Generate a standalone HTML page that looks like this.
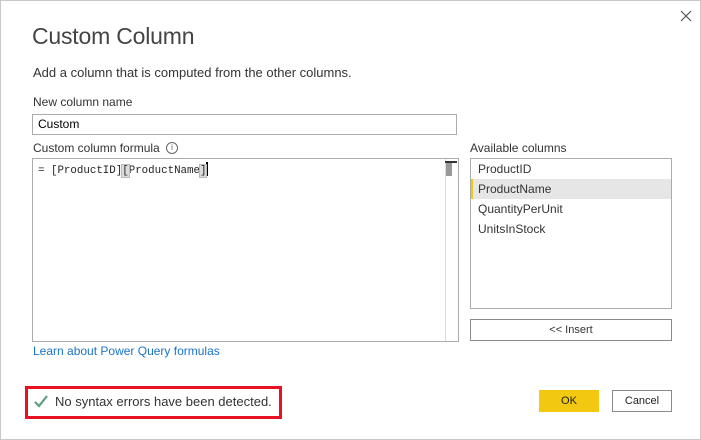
<!DOCTYPE html>
<html><head><style>
body{margin:0;width:701px;height:440px;background:#fff;font-family:"Segoe UI","Liberation Sans",sans-serif;color:#333;position:relative;overflow:hidden}
.a{position:absolute}
.box{position:absolute;box-sizing:border-box;border:1px solid #ababab;background:#fff}
.t{font-size:12px;color:#333;white-space:nowrap}
</style></head><body>
<div class="a" style="left:0;top:0;width:701px;height:440px;box-sizing:border-box;border:1px solid #c8c8c8"></div>
<svg class="a" style="left:680px;top:10px" width="12" height="12"><path d="M1 1L11 11M11 1L1 11" stroke="#555" stroke-width="1.2"/></svg>
<div class="a" style="left:32px;top:23px;font-size:23px;font-weight:300;color:#444;letter-spacing:-0.2px">Custom Column</div>
<div class="a" style="left:33px;top:65px;font-size:13px;color:#333">Add a column that is computed from the other columns.</div>
<div class="a t" style="left:33px;top:95px">New column name</div>
<div class="box" style="left:32px;top:114px;width:425px;height:21px"></div>
<div class="a t" style="left:38px;top:117px;color:#000">Custom</div>
<div class="a t" style="left:33px;top:141px">Custom column formula</div>
<div class="a" style="left:166px;top:142px;width:10px;height:10px;border:1px solid #666;border-radius:50%;font-size:8px;line-height:10px;text-align:center;color:#555">i</div>
<div class="box" style="left:32px;top:158px;width:427px;height:184px"></div>
<div class="a" style="left:445px;top:159px;width:1px;height:182px;background:#ddd"></div>
<div class="a" style="left:445px;top:161px;width:12px;height:2px;background:#333"></div>
<div class="a" style="left:446px;top:163px;width:6px;height:13px;background:#999"></div>
<div class="a" style="left:38px;top:162px;font-family:Consolas,'Liberation Mono',monospace;font-size:10.8px;color:#222;white-space:pre">= [ProductID]<span style="background:#ddd;outline:1px solid #bbb">[</span>ProductName<span style="background:#ddd;outline:1px solid #bbb">]</span><span style="display:inline-block;width:2px;height:14px;background:#000;vertical-align:-3px"></span></div>
<div class="a t" style="left:470px;top:141px">Available columns</div>
<div class="box" style="left:470px;top:158px;width:202px;height:151px"></div>
<div class="a" style="left:471px;top:179px;width:200px;height:20px;background:#e6e6e6"></div>
<div class="a" style="left:471px;top:179px;width:2px;height:20px;background:#f2c811"></div>
<div class="a t" style="left:478px;top:162px">ProductID</div>
<div class="a t" style="left:478px;top:182px">ProductName</div>
<div class="a t" style="left:478px;top:202px">QuantityPerUnit</div>
<div class="a t" style="left:478px;top:222px">UnitsInStock</div>
<div class="box" style="left:470px;top:319px;width:202px;height:22px;border-color:#8a8a8a;font-size:11px;text-align:center;line-height:20px">&lt;&lt; Insert</div>
<div class="a t" style="left:33px;top:344px;color:#1a73c8">Learn about Power Query formulas</div>
<div class="a" style="left:25px;top:386px;width:257px;height:33px;box-sizing:border-box;border:3px solid #e81123"></div>
<svg class="a" style="left:34px;top:395px" width="14" height="13"><path d="M1 7L5 11L13 1" stroke="#5a9e7d" stroke-width="2.2" fill="none"/></svg>
<div class="a" style="left:55px;top:394px;font-size:13px;color:#333">No syntax errors have been detected.</div>
<div class="a" style="left:539px;top:390px;width:60px;height:22px;background:#f2c811;font-size:11px;text-align:center;line-height:22px;color:#222">OK</div>
<div class="box" style="left:612px;top:390px;width:60px;height:22px;border-color:#8a8a8a;font-size:11px;text-align:center;line-height:20px;color:#222">Cancel</div>
</body></html>
